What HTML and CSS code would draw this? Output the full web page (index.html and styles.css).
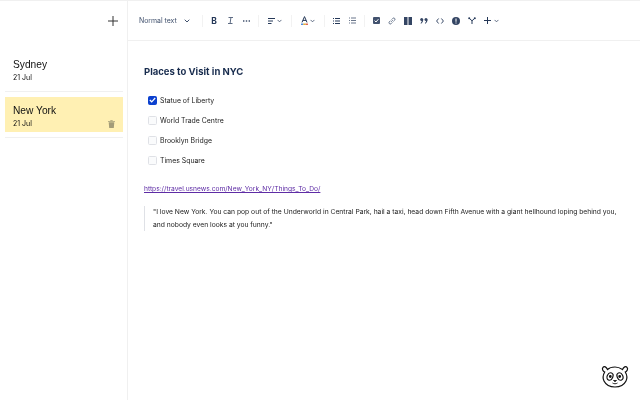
FILE: index.html
```html
<!DOCTYPE html>
<html lang="en">
<head>
<meta charset="utf-8">
<title>Notes</title>
<link rel="stylesheet" href="styles.css">
</head>
<body>
<div class="app">
  <aside class="sidebar">
    <div class="side-top">
      <svg width="10" height="10" viewBox="0 0 10 10"><path d="M5 0v10M0 5h10" stroke="#333" stroke-width="1" fill="none"/></svg>
    </div>
    <div class="note-list">
      <div class="note">
        <div class="note-title">Sydney</div>
        <div class="note-date">21 Jul</div>
      </div>
      <div class="note active">
        <div class="note-card">
          <div class="note-title">New York</div>
          <div class="note-row">
            <div class="note-date">21 Jul</div>
            <svg width="7" height="8" viewBox="0 0 7 8"><path d="M0 1h7v.8H0zM2.300.2h2.400V1H2.300zM.7 2.200h5.600L5.800 8H1.200z" fill="#a39c78"/></svg>
          </div>
        </div>
      </div>
    </div>
  </aside>
  <main class="main">
    <div class="toolbar">
      <div class="style-group">
        <span class="style-label">Normal text</span>
        <svg width="6" height="4" viewBox="0 0 6 4"><path d="M.7.7 3 3l2.300-2.300" class="st"/></svg>
      </div>
      <span class="sep"></span>
      <div class="group">
        <span class="cell bold-b">B</span>
        <span class="cell"><svg width="7" height="7" viewBox="0 0 7 7"><path d="M1.500.5h4.500M1 6.500h4.500M3.900.5 3.100 6.500" fill="none" stroke="#5e6c84" stroke-width="1"/></svg></span>
        <span class="cell"><svg width="7" height="2" viewBox="0 0 7 2"><path d="M0 .3h1.400v1.400H0zM2.800.3h1.400v1.400H2.800zM5.600.3H7v1.400H5.600z" fill="#42526e"/></svg></span>
      </div>
      <span class="sep"></span>
      <div class="group menu">
        <svg width="7" height="6" viewBox="0 0 7 6"><path d="M0 0h7v1H0zM0 2.500h5v1H0zM0 5h3.500v1H0z" fill="#253858"/></svg>
        <svg width="5" height="4" viewBox="0 0 6 4"><path d="M.7.7 3 3l2.300-2.300" class="st"/></svg>
      </div>
      <span class="sep"></span>
      <div class="group menu">
        <svg width="7" height="9" viewBox="0 0 7 9"><path d="M1 6.400 3.500.6 6 6.400M1.900 4.400h3.200" fill="none" stroke="#253858" stroke-width="1"/><path d="M0 7.600h2.300v1.200H0z" fill="#2a6fdb"/><path d="M2.300 7.600h2.400v1.200H2.300z" fill="#d9a400"/><path d="M4.700 7.600H7v1.200H4.700z" fill="#d9412b"/></svg>
        <svg width="5" height="4" viewBox="0 0 6 4"><path d="M.7.7 3 3l2.300-2.300" class="st"/></svg>
      </div>
      <span class="sep"></span>
      <div class="group">
        <span class="cell"><svg width="7" height="6" viewBox="0 0 7 6"><path d="M0 0h1v1H0zM0 2.500h1v1H0zM0 5h1v1H0zM2 0h5v1H2zM2 2.500h5v1H2zM2 5h5v1H2z" fill="#253858"/></svg></span>
        <span class="cell"><svg width="7" height="7" viewBox="0 0 7 7"><path d="M0 .5h1v1H0zM0 3h1v1H0zM0 5.500h1v1H0zM2 .5h5v1H2zM2 3h5v1H2zM2 5.500h5v1H2z" fill="#6b778c"/></svg></span>
      </div>
      <span class="sep"></span>
      <div class="group">
        <span class="cell"><svg width="7" height="7" viewBox="0 0 7 7"><rect width="7" height="7" rx="1" fill="#42526e"/><path d="M1.600 3.600 3 5l2.400-2.800" fill="none" stroke="#fff" stroke-width="1"/></svg></span>
        <span class="cell"><svg width="8" height="8" viewBox="0 0 8 8"><path d="M3.200 4.800 4.800 3.200M2.600 3.600 1.200 5a1.300 1.300 0 0 0 1.800 1.800l1.400-1.400M3.600 2.600 5 1.200A1.300 1.300 0 0 1 6.800 3L5.400 4.400" fill="none" stroke="#5e6c84" stroke-width=".9"/></svg></span>
        <span class="cell"><svg width="8" height="8" viewBox="0 0 8 8"><path d="M0 0h3.500v8H0zM4.500 0H8v8H4.500z" fill="#344563"/></svg></span>
        <span class="cell"><svg width="8" height="6" viewBox="0 0 8 6"><circle cx="1.700" cy="1.500" r="1.500" fill="#344563"/><circle cx="6" cy="1.500" r="1.500" fill="#344563"/><path d="M3.200 1.500C3.200 3.500 2.400 5 1 5.800L.6 5.200C1.300 4.500 1.800 3.500 1.800 2.500zM7.500 1.500C7.500 3.500 6.700 5 5.300 5.800L4.900 5.200C5.600 4.500 6.100 3.500 6.100 2.500z" fill="#344563"/></svg></span>
        <span class="cell"><svg width="8" height="6" viewBox="0 0 8 6"><path d="M2.600.5.600 3l2 2.500M5.400.5 7.400 3l-2 2.500" fill="none" stroke="#253858" stroke-width=".9"/></svg></span>
        <span class="cell"><svg width="8" height="8" viewBox="0 0 8 8"><circle cx="4" cy="4" r="4" fill="#344563"/><path d="M3.500 1.500h1v3.200h-1zM3.500 5.500h1v1h-1z" fill="#fff"/></svg></span>
        <span class="cell"><svg width="8" height="7" viewBox="0 0 8 7"><path d="M1.200 1.200 4 3.800 6.800 1.200M4 3.800V7" fill="none" stroke="#253858" stroke-width="1"/><circle cx="1.200" cy="1.200" r="1" fill="#253858"/><circle cx="6.800" cy="1.200" r="1" fill="#253858"/></svg></span>
        <span class="cell plus-wrap">
          <svg width="7" height="7" viewBox="0 0 7 7"><path d="M3 0h1v3h3v1H4v3H3V4H0V3h3z" fill="#253858"/></svg>
          <svg width="5" height="4" viewBox="0 0 6 4"><path d="M.7.7 3 3l2.300-2.300" class="st"/></svg>
        </span>
      </div>
    </div>
    <div class="doc">
      <h1 class="doc-title">Places to Visit in NYC</h1>
      <ul class="tasks">
        <li class="task"><span class="box checked"><svg width="7" height="6" viewBox="0 0 7 6"><path d="M.8 3 2.700 4.800 6.200 1" fill="none" stroke="#fff" stroke-width="1.200"/></svg></span>Statue of Liberty</li>
        <li class="task"><span class="box"></span>World Trade Centre</li>
        <li class="task"><span class="box"></span>Brooklyn Bridge</li>
        <li class="task"><span class="box"></span>Times Square</li>
      </ul>
      <a class="link" href="#">https://travel.usnews.com/New_York_NY/Things_To_Do/</a>
      <blockquote class="quote">"I love New York. You can pop out of the Underworld in Central Park, hail a taxi, head down Fifth Avenue with a giant hellhound loping behind you, and nobody even looks at you funny."</blockquote>
    </div>
  </main>
</div>
<svg class="panda" width="28" height="24" viewBox="0 0 28 24" fill="none" stroke="#111" stroke-width="1.200">
  <path d="M6.500 5.500C5.500 3 3.200 1.800 2 3.300.6 5 2 7.500 3.700 8 2 11 1.500 14 3 17c2 4 6 6 11 6s9-2 11-6c1.500-3 1-6-.7-9 1.700-.5 3.100-3 1.700-4.700-1.200-1.500-3.500-.3-4.500 2.200C18.500 3.500 16.500 3 14 3s-5.500.5-7.500 2.500z" fill="#fff"/>
  <ellipse cx="9" cy="12.500" rx="2.800" ry="3.800" transform="rotate(25 9 12.500)"/>
  <ellipse cx="19" cy="12.500" rx="2.800" ry="3.800" transform="rotate(-25 19 12.500)"/>
  <circle cx="9.300" cy="12.500" r=".8" fill="#111"/>
  <circle cx="18.700" cy="12.500" r=".8" fill="#111"/>
  <path d="M12.500 16.500h3l-1.500 1.200zM11.500 19c1.500 1 3.500 1 5 0" stroke-width=".9"/>
</svg>
</body>
</html>
```
FILE: styles.css
```css
* { box-sizing: border-box; }
html, body { margin: 0; padding: 0; height: 100%; background: #fff; }
body { font-family: Inter, "Liberation Sans", sans-serif; color: #172b4d; overflow: hidden; position: relative; }
.app { display: flex; height: 400px; border-top: 1px solid #f0f0f0; }
.sidebar { width: 128px; flex: none; border-right: 1px solid #f0f0f0; display: flex; flex-direction: column; will-change: opacity; }
.side-top { height: 39px; display: flex; justify-content: flex-end; align-items: center; padding: 1px 9px 0 0; }
.note-list { padding: 0 4px 0 5px; }
.note { height: 52px; padding: 18px 8px 0; border-bottom: 1px solid #f0f0f0; color: #111; }
.note.active { height: 46px; padding: 5px 0 0; }
.note-card { height: 35px; padding: 7px 8px 0; background: #fff0b3; }
.note-title { font-family: "Liberation Sans", Arial, sans-serif; font-size: 10.200px; line-height: 13px; }
.note-date { font-size: 7px; line-height: 9px; margin-top: 1.500px; }
.note-row { display: flex; justify-content: space-between; align-items: flex-end; }
.main { flex: 1; min-width: 0; will-change: opacity; }
.toolbar { height: 40px; border-bottom: 1px solid #f0f0f0; display: flex; align-items: center; padding-left: 11px; }
.style-group { display: flex; align-items: center; gap: 7px; width: 59px; }
.sep { width: 1px; height: 12px; background: #f2f2f2; margin: 0 3px 0 4px; flex: none; }
.group { display: flex; align-items: center; }
.group.menu { width: 25px; justify-content: center; gap: 2px; }
.cell { width: 16px; display: flex; align-items: center; justify-content: center; }
.st { fill: none; stroke: #42526e; stroke-width: 1; }
.style-label { font-size: 6.900px; color: #42526e; }
.bold-b { font-size: 8.500px; font-weight: 700; color: #253858; }
.plus-wrap { width: auto; margin-left: 4px; gap: 3px; }
.doc { padding: 25px 16px 0; }
.doc-title { margin: 0 0 12px; font-size: 9.500px; line-height: 12px; font-weight: 700; color: #172b4d; }
.tasks { list-style: none; margin: 0; padding: 0 0 0 4px; }
.task { height: 20px; display: flex; align-items: center; font-size: 6.900px; color: #222; gap: 3px; }
.box { width: 9px; height: 9px; border: 1px solid #dfe1e6; border-radius: 1.500px; display: flex; align-items: center; justify-content: center; background: #fafbfc; flex: none; }
.box.checked { background: #0b40cf; border-color: #0b40cf; }
.link { display: block; margin-top: 14px; font-size: 6.650px; line-height: 10px; color: #5e2ca5; text-decoration: underline; }
.quote { margin: 12px 0 0; padding: 0 0 0 8px; border-left: 1px solid #dfe1e6; font-size: 6.740px; line-height: 12.500px; color: #222; width: 478px; }
.panda { position: absolute; right: 11px; bottom: 12px; }
```
